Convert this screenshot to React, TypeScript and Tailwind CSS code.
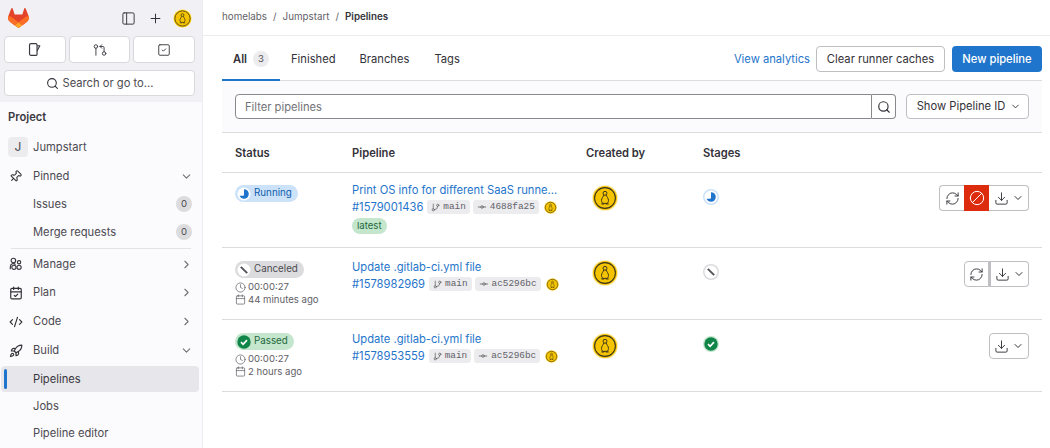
import { Ban, Calendar, CalendarCheck, ChevronDown, ChevronRight, Clock, CodeXml, Download, GitBranch, GitCommitHorizontal, GitPullRequestArrow, PanelLeft, Pin, Plus, RefreshCw, Rocket, Search, SquareCheck } from 'lucide-react';

const Logo = () => (
  <svg width="21" height="20" viewBox="0 0 25 24">
    <path d="m24.507 9.5-.034-.09L21.082.562a.896.896 0 0 0-1.694.091l-2.29 7.01H7.825L5.535.653a.898.898 0 0 0-1.694-.09L.451 9.411.416 9.5a6.297 6.297 0 0 0 2.09 7.278l.012.01.03.022 5.16 3.867 2.56 1.935 1.554 1.176a1.051 1.051 0 0 0 1.268 0l1.555-1.176 2.56-1.935 5.197-3.89.014-.01A6.297 6.297 0 0 0 24.507 9.5Z" fill="#E24329" />
    <path d="m24.507 9.5-.034-.09a11.44 11.44 0 0 0-4.56 2.051l-7.447 5.632 4.742 3.584 5.197-3.89.014-.01A6.297 6.297 0 0 0 24.507 9.5Z" fill="#FC6D26" />
    <path d="m7.707 20.677 2.56 1.935 1.555 1.176a1.051 1.051 0 0 0 1.268 0l1.555-1.176 2.56-1.935-4.743-3.584-4.755 3.584Z" fill="#FCA326" />
    <path d="M5.01 11.461a11.43 11.43 0 0 0-4.56-2.05L.416 9.5a6.297 6.297 0 0 0 2.09 7.278l.012.01.03.022 5.16 3.867 4.745-3.584-7.444-5.632Z" fill="#FC6D26" />
  </svg>
);

// penguin avatar used for the user everywhere
const Avatar = ({ size }: { size: number }) => (
  <svg width={size} height={size} viewBox="0 0 32 32" className="shrink-0">
    <circle cx="16" cy="16" r="16" fill="#fdeeb8" />
    <circle cx="16" cy="16" r="14.8" fill="#f5c400" />
    <circle cx="16" cy="16" r="12.8" fill="none" stroke="#3a3320" strokeWidth="1.3" />
    <circle cx="16" cy="10.2" r="2.4" fill="none" stroke="#3a3320" strokeWidth="1.2" />
    <path d="M14.6 12.2c-.5 2-2.9 4-2.9 6.8 0 2 1 3.2 2.2 3.6h4.2c1.2-.4 2.2-1.6 2.2-3.6 0-2.8-2.4-4.8-2.9-6.8" fill="none" stroke="#3a3320" strokeWidth="1.2" />
    <path d="M11.6 23.2h3.4M17 23.2h3.4" stroke="#3a3320" strokeWidth="1.4" />
  </svg>
);

const IssueIcon = () => (
  <svg width="15" height="15" viewBox="0 0 16 16" fill="none" stroke="#3a383f" strokeWidth="1.25">
    <path d="M10.5 14.2H4.2a1.5 1.5 0 0 1-1.5-1.5V3.3a1.5 1.5 0 0 1 1.5-1.5h5a1.5 1.5 0 0 1 1.5 1.5V14" />
    <path d="M10.8 4h2.9l-2.9 5.4" strokeLinejoin="round" />
  </svg>
);

const ManageIcon = () => (
  <svg width="14" height="14" viewBox="0 0 16 16" fill="none" stroke="#3a383f" strokeWidth="1.3">
    <circle cx="5" cy="4" r="2.6" />
    <path d="M1.5 14v-3a3.5 3.5 0 0 1 6 -2.4" />
    <circle cx="11.5" cy="6" r="1.9" />
    <circle cx="5.6" cy="11.8" r="2.4" />
    <circle cx="11.5" cy="11.8" r="2.4" />
  </svg>
);

const StatusIcon = ({ status }: { status: string }) => {
  if (status === 'running') {
    return (
      <svg width="16" height="16" viewBox="0 0 16 16" className="shrink-0">
        <circle cx="8" cy="8" r="8" fill="#cbe2f9" />
        <circle cx="8" cy="8" r="6.5" fill="#fff" />
        <path d="M8 3.2a4.8 4.8 0 0 1 0 9.6 4.8 4.8 0 0 1-4.4-3H7a1 1 0 0 0 1-1Z" fill="#1f75cb" />
      </svg>
    );
  }
  if (status === 'canceled') {
    return (
      <svg width="16" height="16" viewBox="0 0 16 16" className="shrink-0">
        <circle cx="8" cy="8" r="8" fill="#dcdcde" />
        <circle cx="8" cy="8" r="6.5" fill="#fff" />
        <path d="M4.8 4.8l6.4 6.4" stroke="#535158" strokeWidth="1.9" />
      </svg>
    );
  }
  return (
    <svg width="16" height="16" viewBox="0 0 16 16" className="shrink-0">
      <circle cx="8" cy="8" r="8" fill="#c3e6cd" />
      <circle cx="8" cy="8" r="6.7" fill="#108548" />
      <path d="M5 8.2l2.1 2.1L11 6.2" stroke="#fff" strokeWidth="1.7" fill="none" />
    </svg>
  );
};

const NavRow = ({ icon, label, chevron, count, h }: { icon?: React.ReactNode; label: string; chevron?: 'down' | 'right'; count?: string; h: string }) => (
  <div className={`flex items-center pl-2 pr-[10px] text-[11.2px] text-[#4c4a51] ${h}`}>
    <span className="w-[25px] flex justify-center -ml-[1px] mr-[1px] pr-[8px]">{icon}</span>
    <span className="flex-1">{label}</span>
    {chevron === 'down' && <ChevronDown size={13} color="#737278" className="mr-[-1px]" />}
    {chevron === 'right' && <ChevronRight size={13} color="#737278" className="mr-[-1px]" />}
    {count && <span className="w-4 h-4 rounded-full bg-[#dcdcde] text-[9.6px] flex items-center justify-center">{count}</span>}
  </div>
);

const Sidebar = () => (
  <aside className="w-[203px] h-[448px] shrink-0 border-r border-[#ececef] bg-[#fbfafd] overflow-hidden">
    <div className="h-[102px] bg-[#f1f0f5] px-1 pt-2">
      <div className="flex items-center h-[20px] pl-1 pr-[6px]">
        <Logo />
        <div className="flex-1" />
        <PanelLeft size={15} color="#333238" strokeWidth={1.5} />
        <Plus size={15} color="#333238" strokeWidth={1.6} className="ml-[12px]" />
        <span className="ml-[10px]"><Avatar size={19} /></span>
      </div>
      <div className="flex gap-[3px] mt-[8px] pr-[3px]">
        <div className="flex-1 h-[27px] bg-white border border-[#d9d8dd] rounded flex items-center justify-center"><IssueIcon /></div>
        <div className="flex-1 h-[27px] bg-white border border-[#d9d8dd] rounded flex items-center justify-center"><GitPullRequestArrow size={14} color="#3a383f" strokeWidth={1.6} /></div>
        <div className="flex-1 h-[27px] bg-white border border-[#d9d8dd] rounded flex items-center justify-center"><SquareCheck size={14} color="#3a383f" strokeWidth={1.6} /></div>
      </div>
      <div className="h-[26px] mt-[7px] mr-[3px] bg-white border border-[#d9d8dd] rounded flex items-center justify-center gap-[4px] text-[11.2px] text-[#4c4a51]">
        <Search size={13} color="#333238" />
        <span>Search or go to...</span>
      </div>
    </div>
    <div className="px-2 pt-[3px] text-[11.2px] font-semibold text-[#3a383f] h-[28px] flex items-center">Project</div>
    <div className="flex items-center h-[24px] pl-2 mt-[5px] text-[11.2px] text-[#4c4a51]">
      <span className="w-5 h-5 rounded bg-[#ececef] flex items-center justify-center mr-[5px] text-[12px]">J</span>
      Jumpstart
    </div>
    <div className="mt-[3px]">
      <NavRow h="h-[28px]" icon={<Pin size={13} color="#333238" className="rotate-45" />} label="Pinned" chevron="down" />
      <NavRow h="h-[28px]" label="Issues" count="0" />
      <NavRow h="h-[28px]" label="Merge requests" count="0" />
    </div>
    <div className="h-px bg-[#e3e2e6] mx-[11px] mt-[2px] mb-[1px]" />
    <NavRow h="h-[28px]" icon={<ManageIcon />} label="Manage" chevron="right" />
    <NavRow h="h-[29px]" icon={<CalendarCheck size={14} color="#333238" />} label="Plan" chevron="right" />
    <NavRow h="h-[29px]" icon={<CodeXml size={14} color="#333238" />} label="Code" chevron="right" />
    <NavRow h="h-[29px]" icon={<Rocket size={14} color="#333238" />} label="Build" chevron="down" />
    <div className="relative mt-px mx-[1px] w-[198px] h-[26px] bg-[#e7e6ea] rounded flex items-center pl-[32px] text-[11.2px] text-[#3a383f]">
      <span className="absolute left-[3px] top-[3px] w-[3px] h-[20px] rounded bg-[#1f75cb]" />
      Pipelines
    </div>
    <NavRow h="h-[28px]" label="Jobs" />
    <NavRow h="h-[27px]" label="Pipeline editor" />
  </aside>
);

const Actions = ({ retry, cancel }: { retry?: boolean; cancel?: boolean }) => (
  <div className="flex h-[26px] text-[#333238]">
    {retry && (
      <div className={`w-[25px] bg-white flex items-center justify-center border border-[#bfbfc3] rounded-l ${cancel ? 'border-r-0' : ''}`}>
        <RefreshCw size={15} strokeWidth={1.5} />
      </div>
    )}
    {cancel && (
      <div className="w-[25px] bg-[#dd2b0e] flex items-center justify-center">
        <Ban size={16} color="#fff" strokeWidth={1.5} className="-scale-x-100" />
      </div>
    )}
    <div className={`w-[40px] bg-white flex items-center justify-center gap-[3px] border border-[#bfbfc3] rounded-r ${retry ? (cancel ? 'border-l-0' : 'border-l-2') : 'rounded-l'}`}>
      <Download size={15} strokeWidth={1.5} />
      <ChevronDown size={12} />
    </div>
  </div>
);

const Tag = ({ children, icon }: { children: string; icon: React.ReactNode }) => (
  <span className="inline-flex items-center gap-[3px] h-[14px] px-[4px] bg-[#ececef] rounded-[3px] text-[9.4px] text-[#626168] [font-family:'Liberation_Mono',monospace]">
    {icon}{children}
  </span>
);

type Row = {
  status: string;
  label: string;
  badge: string;
  duration?: string;
  ago?: string;
  title: string;
  id: string;
  sha: string;
  latest?: boolean;
  h: string;
  titleTop: string;
  iconTop: string;
  avatarTop: string;
  retry?: boolean;
  cancel?: boolean;
};

const rows: Row[] = [
  { status: 'running', label: 'Running', badge: 'bg-[#cbe2f9] text-[#0b5cad] w-[63px]', title: 'Print OS info for different SaaS runne...', id: '#1579001436', sha: '4688fa25', latest: true, h: 'h-[75px]', titleTop: 'pt-[9px]', iconTop: 'pt-[12px]', avatarTop: 'pt-[12px]', retry: true, cancel: true },
  { status: 'canceled', label: 'Canceled', badge: 'bg-[#dcdcde] text-[#4c4a51] w-[69px]', duration: '00:00:27', ago: '44 minutes ago', title: 'Update .gitlab-ci.yml file', id: '#1578982969', sha: 'ac5296bc', h: 'h-[72px]', titleTop: 'pt-[11px]', iconTop: 'pt-[13px]', avatarTop: 'pt-[12px]', retry: true },
  { status: 'passed', label: 'Passed', badge: 'bg-[#c3e6cd] text-[#24663b] w-[59px]', duration: '00:00:27', ago: '2 hours ago', title: 'Update .gitlab-ci.yml file', id: '#1578953559', sha: 'ac5296bc', h: 'h-[72px]', titleTop: 'pt-[11px]', iconTop: 'pt-[13px]', avatarTop: 'pt-[13px]' },
];

const PipelineRow = ({ r }: { r: Row }) => (
  <div className={`grid grid-cols-[117px_234px_117px_1fr] px-[13px] border-b border-[#dcdcde] ${r.h}`}>
    <div className={r.iconTop}>
      <span className={`flex items-center h-[17px] rounded-full gap-[2px] pl-[1px] text-[9.8px] ${r.badge}`}>
        <StatusIcon status={r.status} />
        {r.label}
      </span>
      {r.duration && (
        <div className="mt-[3px] text-[9.6px] leading-[12.5px] text-[#626168]">
          <div className="flex items-center gap-[2px]"><Clock size={11} strokeWidth={1.6} />{r.duration}</div>
          <div className="flex items-center gap-[2px]"><Calendar size={11} strokeWidth={1.6} />{r.ago}</div>
        </div>
      )}
    </div>
    <div className={`${r.titleTop} text-[11.2px] leading-[16px] text-[#1f75cb]`}>
      <div className="whitespace-nowrap">{r.title}</div>
      <div className="flex items-center gap-[4px] whitespace-nowrap mt-px">
        {r.id}
        <span className="flex items-center gap-[3px]">
          <Tag icon={<GitBranch size={9} />}>main</Tag>
          <Tag icon={<GitCommitHorizontal size={10} />}>{r.sha}</Tag>
        </span>
        <span className="ml-px"><Avatar size={13} /></span>
      </div>
      {r.latest && (
        <div className="mt-[2px]">
          <span className="inline-flex items-center h-[16px] px-[5px] rounded-full bg-[#c3e6cd] text-[#24663b] text-[9.6px]">latest</span>
        </div>
      )}
    </div>
    <div className={`${r.avatarTop} pl-[6px]`}><Avatar size={26} /></div>
    <div className="flex justify-between">
      <div className="pt-[16px]"><StatusIcon status={r.status} /></div>
      <div className={r.iconTop}><Actions retry={r.retry} cancel={r.cancel} /></div>
    </div>
  </div>
);

export default function App() {
  return (
    <div className="flex w-[1050px] h-[448px] overflow-hidden bg-white [font-family:Inter,sans-serif]">
      <Sidebar />
      <main className="flex-1 min-w-0">
        <div className="h-[36px] border-b border-[#ececef] pl-[19px] flex items-center gap-[6px] text-[9.8px] text-[#626168]">
          <span>homelabs</span><span>/</span><span>Jumpstart</span><span>/</span><span className="font-semibold text-[9.8px] text-[#333238]">Pipelines</span>
        </div>
        <div className="ml-[19px] mr-[8px]">
          <div className="flex items-center h-[45px] pt-[2px] border-b border-[#dcdcde] text-[11.2px] text-[#333238]">
            <div className="h-[43px] w-[58px] pt-[2px] border-b-2 border-[#1f75cb] flex items-center pl-[11px] gap-[6px] font-semibold">
              All
              <span className="w-4 h-4 rounded-full bg-[#ececef] text-[9.6px] font-normal flex items-center justify-center text-[#535158]">3</span>
            </div>
            <span className="ml-[11px]">Finished</span>
            <span className="ml-[24px]">Branches</span>
            <span className="ml-[25px]">Tags</span>
            <div className="flex-1" />
            <span className="text-[#1f75cb]">View analytics</span>
            <span className="ml-[6px] h-[26px] w-[129px] border border-[#bfbfc3] rounded flex items-center justify-center">Clear runner caches</span>
            <span className="ml-[7px] h-[26px] w-[90px] bg-[#1f75cb] text-white font-medium rounded flex items-center justify-center">New pipeline</span>
          </div>
          <div className="h-[52px] bg-[#fbfafd] border-b border-[#dcdcde] flex items-center px-[13px]">
            <div className="flex-1 h-[25px] pt-px bg-white border border-[#89888d] rounded-l flex items-center pl-[9px] text-[11.2px] text-[#737278]">Filter pipelines</div>
            <div className="w-[24px] h-[25px] bg-white border border-l-0 border-[#89888d] rounded-r flex items-center justify-center"><Search size={14} color="#333238" /></div>
            <div className="ml-[10px] w-[123px] h-[25px] pl-[3px] bg-white border border-[#bfbfc3] rounded flex items-center justify-center gap-[5px] text-[11.2px] text-[#333238]">
              Show Pipeline ID
              <ChevronDown size={11} />
            </div>
          </div>
          <div className="grid grid-cols-[117px_234px_117px_1fr] items-center h-[40px] pt-px px-[13px] border-b border-[#dcdcde] text-[11.2px] font-semibold text-[#333238]">
            <span>Status</span><span>Pipeline</span><span>Created by</span><span>Stages</span>
          </div>
          {rows.map((r) => <PipelineRow key={r.id} r={r} />)}
        </div>
      </main>
    </div>
  );
}
